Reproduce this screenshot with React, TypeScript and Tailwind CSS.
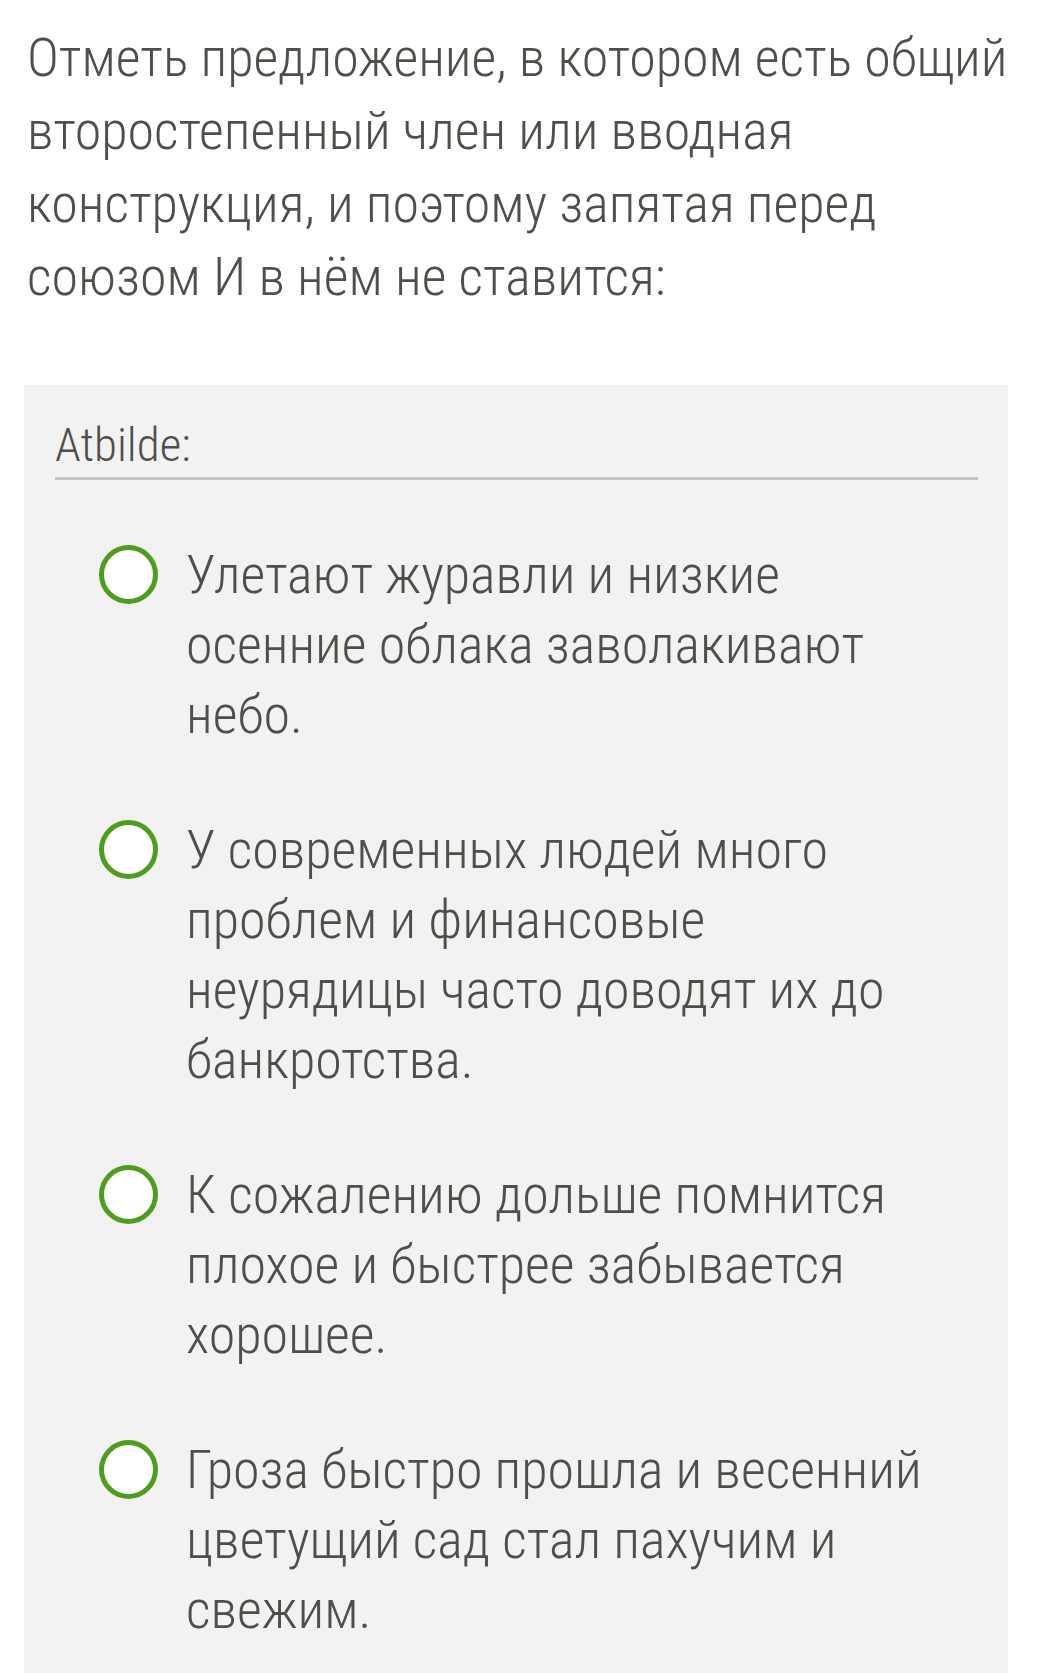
const options = [
  'Улетают журавли и низкие осенние облака заволакивают небо.',
  'У современных людей много проблем и финансовые неурядицы часто доводят их до банкротства.',
  'К сожалению дольше помнится плохое и быстрее забывается хорошее.',
  'Гроза быстро прошла и весенний цветущий сад стал пахучим и свежим.',
]

function Radio() {
  return (
    <span className="mt-[5px] h-[59px] w-[59px] shrink-0 rounded-full border-[5px] border-[#4e9d1e] bg-white" />
  )
}

export default function App() {
  return (
    <div className="min-h-screen bg-white font-['Roboto',sans-serif] font-light font-stretch-condensed text-[#4f4f4a]">
      {/* Question */}
      <h1 className="pl-[27px] pr-[46px] pt-[21px] text-[54px] leading-[73px] font-light">
        Отметь предложение, в котором есть общий второстепенный член или вводная конструкция, и поэтому запятая перед союзом И в нём не ставится:
      </h1>

      {/* Answer card */}
      <div className="ml-[24px] mt-[72px] w-[984px] bg-[#f2f2f2] pl-[31px] pr-[30px] pt-[30px] pb-[80px]">
        <div className="border-b-[3px] border-[#c4c4c4] pb-[2px] text-[47px] leading-[60px]">Atbilde:</div>

        <div className="mt-[60px] flex flex-col gap-[65px] pl-[44px]">
          {options.map((text) => (
            <label key={text} className="flex items-start gap-[28px]">
              <Radio />
              <span className="max-w-[770px] text-[54px] leading-[70px]">{text}</span>
            </label>
          ))}
        </div>
      </div>
    </div>
  )
}
